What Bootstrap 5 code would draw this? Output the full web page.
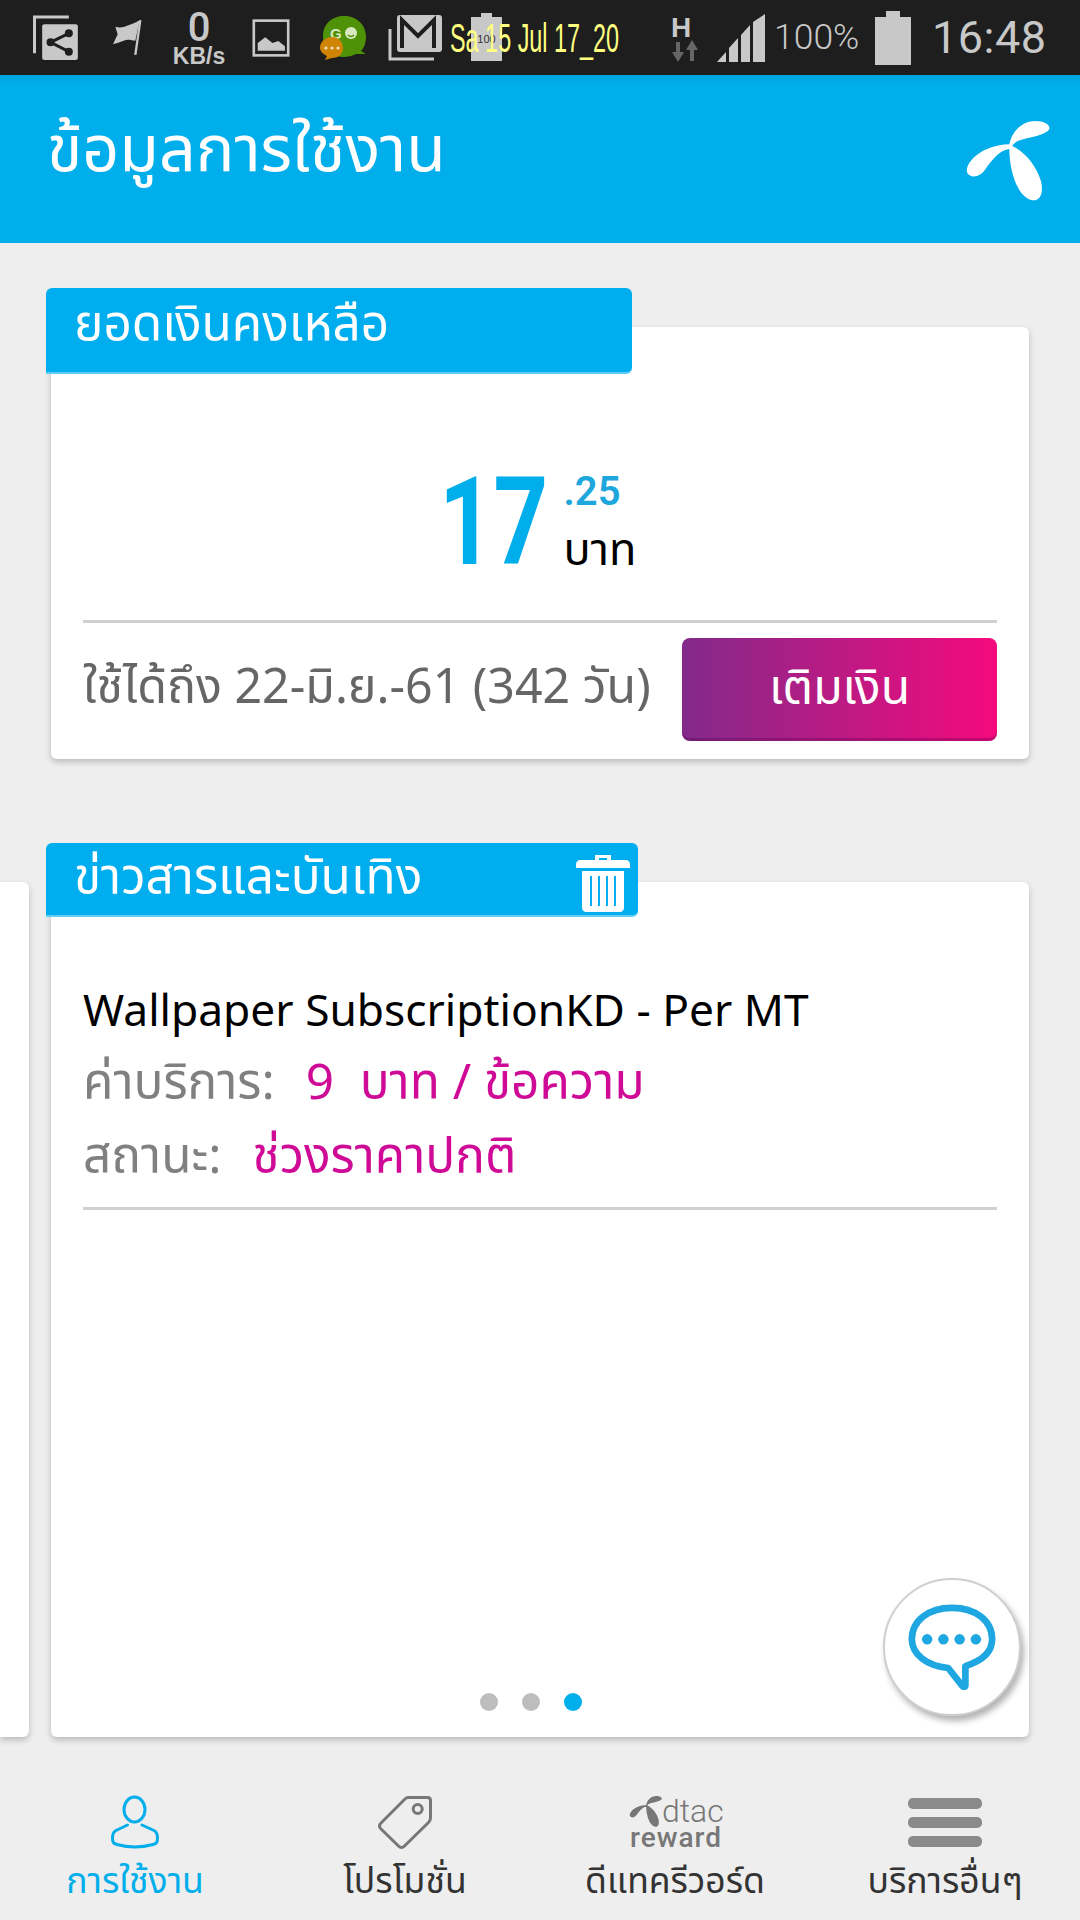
<!DOCTYPE html>
<html lang="th">
<head>
    <meta charset="UTF-8">
    <title>ข้อมูลการใช้งาน</title>
    <link href="https://cdn.jsdelivr.net/npm/bootstrap@5.3.3/dist/css/bootstrap.min.css" rel="stylesheet">
    <style>
        body { width: 1080px; height: 1920px; overflow: hidden; background: #eeeeee; font-family: "Noto Sans Thai", "Noto Sans", "Liberation Sans", sans-serif; }
        .status-bar { height: 75px; background: #1e1e1e; color: #c8c8c8; font-family: Roboto, sans-serif; padding-left: 32px; }
        .status-bar > * { flex: none; }
        .gap-flag { margin-left: 33px; }
        .gap-image { margin-left: 26px; }
        .gap-go { margin-left: 30px; }
        .gap-mail { margin-left: 21px; }
        .gap-net { margin-left: 50px; }
        .gap-signal { margin-left: 17px; }
        .gap-batt { margin-left: 11px; }
        .kb-speed { margin-left: 30px; width: 54px; text-align: center; }
        .kb-speed b { display: block; font-size: 40px; line-height: 36px; font-weight: 500; }
        .kb-speed span { display: block; font: 700 23px/20px "Liberation Sans", sans-serif; margin: 0 -3px; white-space: nowrap; }
        .date-wrap { margin-left: 8px; width: 170px; height: 75px; position: relative; }
        .date-wrap svg { position: absolute; left: 21px; top: 13px; }
        .date-text { position: absolute; left: 0; top: 15px; color: #ffff80; font: 40px/46px "Liberation Sans", sans-serif; transform: scaleX(.585); transform-origin: left top; white-space: nowrap; }
        .batt-pct { margin-left: 9px; font-size: 35.500px; font-weight: 300; width: 90px; white-space: nowrap; }
        .clock { margin-left: 21px; font-size: 45px; font-weight: 400; letter-spacing: .5px; }
        .app-header { height: 168px; background: linear-gradient(#00a5dc, #00aeeb 10px); color: #fff; padding: 0 20px 0 47px; }
        .app-title { font-size: 64.500px; line-height: 1; margin-bottom: 14px; }
        .info-card { background: #fff; border-radius: 6px; box-shadow: 0 3px 6px rgba(0,0,0,.22); position: relative; }
        .balance-card { margin: 84px 51px 0; height: 432px; padding: 0 32px; }
        .tab-label { position: absolute; left: -5px; background: #00aeef; color: #fff; border-radius: 6px 6px 6px 0; border-bottom: 2px solid #5ccdf5; font-size: 49.500px; line-height: 1; padding-left: 28px; }
        .tab-one { top: -39px; width: 586px; height: 86px; padding-top: 13px; }
        .tab-two { top: -39px; width: 592px; height: 74px; padding-top: 11px; }
        .amount-row { height: 293px; padding: 151px 8px 0 0; }
        .amount-big { width: 110px; color: #00aeeb; font: 700 122px/90px Roboto, sans-serif; transform: scaleX(.78); transform-origin: left top; }
        .amount-side { margin-left: 15px; width: 70px; }
        .amount-cents { color: #1ea7dc; font: 600 40px/34px Roboto, sans-serif; margin-top: -3px; }
        .amount-unit { color: #000; font-size: 45px; line-height: 50px; margin-top: 17px; }
        .rule-line { height: 3px; background: #d0d0d0; }
        .expire-text { color: #666; font-size: 48.300px; line-height: 1; white-space: nowrap; }
        .topup-btn { width: 315px; height: 103px; border: 0; border-radius: 8px; color: #fff; font-size: 48px; background: linear-gradient(90deg, #822a8a, #f50a7d); box-shadow: inset 0 -3px 0 rgba(80,0,80,.3); }
        .topup-row { height: 136px; padding: 15px 0 18px; }
        .news-track { margin-top: 123px; gap: 22px; }
        .side-card { width: 29px; height: 855px; border-radius: 0 6px 6px 0; flex: none; }
        .news-card { width: 978px; height: 855px; padding: 0 32px; flex: none; }
        .news-title { color: #000; font-size: 44.300px; line-height: 60px; padding-top: 101px; margin-bottom: 4px; }
        .news-line { font-size: 49.500px; line-height: 74px; color: #808080; }
        .news-line span { color: #cf0a96; margin-left: 18px; }
        .news-rule { margin-top: 12px; }
        .pager-dots { position: absolute; left: 0; right: 18px; bottom: 26px; gap: 24px; }
        .pager-dots i { width: 18px; height: 18px; border-radius: 50%; background: #bdbdbd; }
        .pager-dots i.on { background: #00aeeb; }
        .chat-fab { position: absolute; left: 832px; top: 696px; width: 138px; height: 138px; border-radius: 50%; background: #fff; border: 2px solid #cfcfcf; box-shadow: 3px 5px 6px rgba(0,0,0,.3); }
        .bottom-nav { margin-top: 50px; }
        .nav-cell { height: 133px; color: #333; font-size: 35.500px; line-height: 1; }
        .nav-cell.active { color: #00aeeb; }
        .nav-icon { height: 53px; margin: 9px 0 16px; overflow: visible; }
        .reward-logo { width: 94px; position: relative; color: #777; font-family: Roboto, sans-serif; }
        .reward-logo svg { position: absolute; left: 0; top: -1px; }
        .reward-logo em { position: absolute; left: 34px; top: 0; font-style: normal; font-size: 32px; font-weight: 300; line-height: 30px; }
        .reward-logo b { position: absolute; left: 2px; top: 30px; font-size: 28px; font-weight: 500; line-height: 24px; letter-spacing: 1px; }
    </style>
</head>
<body>
    <div class="status-bar d-flex align-items-center">
        <!-- status icons -->
        <svg width="47" height="46" viewBox="35 30 140 138"><path d="M42 145V36h103" fill="none" stroke="#c8c8c8" stroke-width="9"/><rect x="65" y="58" width="107" height="107" rx="6" fill="#c8c8c8"/><path d="M145 85 90 112l55 28" fill="none" stroke="#1e1e1e" stroke-width="9"/><circle cx="145" cy="85" r="12" fill="#1e1e1e"/><circle cx="90" cy="112" r="12" fill="#1e1e1e"/><circle cx="145" cy="140" r="12" fill="#1e1e1e"/></svg>
        <svg class="gap-flag" width="30" height="37" viewBox="275 45 90 110"><path d="M285 68c12 4 24 2 35-3 14-6 28-10 38-17l-13 62c-12-2-24-6-35 0-11 4-22 8-32 10l14-30z" fill="#c8c8c8"/><path d="M360 48 345 152" stroke="#c8c8c8" stroke-width="7"/></svg>
        <div class="kb-speed"><b>0</b><span>KB/s</span></div>
        <svg class="gap-image" width="38" height="38" viewBox="695 41 115 116"><rect x="700" y="46" width="105" height="106" fill="none" stroke="#c8c8c8" stroke-width="8"/><path d="M712 138v-24l23-17 22 17 18-6 20 16v14z" fill="#c8c8c8"/></svg>
        <svg class="gap-go" width="47" height="44" viewBox="0 0 47 44"><path d="M24 0C36 0 46 8 46 21c0 6-2 11-5 14l5 3-10 0c-4 2-8 3-12 3C12 41 3 32 3 20 3 8 12 0 24 0z" fill="#4f9208"/><text x="10" y="23" font-size="15" font-weight="700" fill="#d8e8c0" font-family="Liberation Sans">G</text><circle cx="31" cy="17" r="6" fill="#d8e8c0"/><path d="M28 19c2 2 4 2 6 0" fill="none" stroke="#4f9208" stroke-width="1.5"/><path d="M12 21c7 0 11 5 11 11s-4 10-11 10l-7 2 2-4C3 38 0 35 0 32c0-6 5-11 12-11z" fill="#cf8406"/><circle cx="6" cy="32" r="1.6" fill="#f0e0c0"/><circle cx="12" cy="32" r="1.6" fill="#f0e0c0"/><circle cx="18" cy="32" r="1.6" fill="#f0e0c0"/></svg>
        <svg class="gap-mail" width="54" height="46" viewBox="0 0 54 46"><path d="M2 14v30h44" fill="none" stroke="#c8c8c8" stroke-width="3"/><rect x="9" y="0" width="45" height="37" rx="3" fill="#c8c8c8"/><path d="M14 33V5l16 16L46 5v28" fill="none" stroke="#1e1e1e" stroke-width="4"/></svg>
        <div class="date-wrap">
            <svg width="31" height="48" viewBox="0 0 31 48"><path d="M10 0h11v4h10v44H0V4h10z" fill="#c8c8c8"/><text x="15.500" y="30" font-size="11" text-anchor="middle" fill="#333" font-family="Liberation Sans">100</text></svg>
            <div class="date-text">Sa 15 Jul 17_20</div>
        </div>
        <svg class="gap-net" width="30" height="50" viewBox="0 0 30 50"><text x="1" y="24" font-size="28" font-weight="700" fill="#c8c8c8" font-family="Liberation Sans">H</text><path d="M8 49 2 39h4V29h4v10h4z" fill="#666"/><path d="M22 27l6 10h-4v11h-4V37h-4z" fill="#666"/></svg>
        <svg class="gap-signal" width="48" height="48" viewBox="0 0 48 48"><path d="M0 48 9 38v10zM12 48V34l9-10v24zM24 48V21l9-10v37zM36 48V8l12-8v48z" fill="#c8c8c8"/></svg>
        <div class="batt-pct">100%</div>
        <svg class="gap-batt" width="36" height="54" viewBox="0 0 36 54"><path d="M11 0h14v6h11v48H0V6h11z" fill="#c8c8c8"/></svg>
        <div class="clock">16:48</div>
    </div>

    <div class="app-header d-flex align-items-center justify-content-between">
        <div class="app-title">ข้อมูลการใช้งาน</div>
        <svg width="110" height="105" viewBox="0 0 330 315"><path d="M178 112C185 75 215 42 255 42c30 0 47 13 43 24-4 12-38 22-73 29-20 5-33 10-38 22 38 18 71 58 85 103 10 35 0 62-24 60-43-5-70-85-70-154-28 2-53 34-73 62-15 22-43 27-53 10-10-23 33-83 126-86z" fill="#fff"/></svg>
    </div>

    <div class="info-card balance-card">
        <div class="tab-label tab-one">ยอดเงินคงเหลือ</div>
        <div class="amount-row d-flex justify-content-center">
            <div class="amount-big">17</div>
            <div class="amount-side">
                <div class="amount-cents">.25</div>
                <div class="amount-unit">บาท</div>
            </div>
        </div>
        <div class="rule-line"></div>
        <div class="topup-row d-flex align-items-center justify-content-between">
            <div class="expire-text">ใช้ได้ถึง 22-มิ.ย.-61 (342 วัน)</div>
            <button class="topup-btn" type="button">เติมเงิน</button>
        </div>
    </div>

    <div class="news-track d-flex">
        <div class="info-card side-card"></div>
        <div class="info-card news-card">
            <div class="tab-label tab-two d-flex justify-content-between">
                <span>ข่าวสารและบันเทิง</span>
                <svg class="me-2" width="54" height="58" viewBox="0 0 54 58"><path d="M19 6V1h16v5h15c2 0 4 2 4 4v4H0v-4c0-2 2-4 4-4zm4 0h8V4h-8z" fill="#fff" fill-rule="evenodd"/><path d="M6 17h42v37c0 2-2 4-4 4H10c-2 0-4-2-4-4z" fill="#fff"/><path d="M15 22v30M23 22v30M31 22v30M39 22v30" stroke="#00aeef" stroke-width="2"/></svg>
            </div>
            <div class="news-title">Wallpaper SubscriptionKD - Per MT</div>
            <div class="news-line">ค่าบริการ: <span>9&nbsp; บาท / ข้อความ</span></div>
            <div class="news-line">สถานะ: <span>ช่วงราคาปกติ</span></div>
            <div class="rule-line news-rule"></div>
            <div class="pager-dots d-flex justify-content-center"><i></i><i></i><i class="on"></i></div>
            <div class="chat-fab d-flex align-items-center justify-content-center">
                <svg width="88" height="86" viewBox="0 0 92 90"><path d="M46 4C22 4 4 17 4 37c0 16 16 28 38 30l15 19c1 1 3 1 3-1V65c16-5 28-14 28-28C88 17 70 4 46 4z" fill="none" stroke="#1ea7e0" stroke-width="7" stroke-linejoin="round"/><circle cx="20" cy="37" r="5.500" fill="#1ea7e0"/><circle cx="37" cy="37" r="5.500" fill="#1ea7e0"/><circle cx="54" cy="37" r="5.500" fill="#1ea7e0"/><circle cx="71" cy="37" r="5.500" fill="#1ea7e0"/></svg>
            </div>
        </div>
    </div>

    <div class="bottom-nav row g-0">
        <div class="col-3 nav-cell active d-flex flex-column align-items-center">
            <svg class="nav-icon" width="50" height="53" viewBox="0 0 50 53"><ellipse cx="24.500" cy="13.500" rx="10.500" ry="12.500" fill="none" stroke="#00aeeb" stroke-width="3"/><path d="M17.500 29 6 34.500C3 36 2.500 38 2.500 42s.5 5.500 4.500 6.500c11 3 25 3 36 0 4-1 4.500-2.500 4.500-6.500s-.5-6-3.500-7.500L32 29" fill="none" stroke="#00aeeb" stroke-width="3" stroke-linecap="round"/></svg>
            <div>การใช้งาน</div>
        </div>
        <div class="col-3 nav-cell d-flex flex-column align-items-center">
            <svg class="nav-icon" width="54" height="53" viewBox="0 0 54 53"><path d="M30 1.500h19.500c2 0 3 1 3 3V22c0 2-.5 3-2 4.500L26.500 50c-2 2-4 2-6 0L3 33c-2-2-2-4 0-6L27 3c1-1 2-1.500 3-1.500z" fill="none" stroke="#777" stroke-width="3" stroke-linejoin="round"/><circle cx="39.700" cy="13" r="4.500" fill="none" stroke="#777" stroke-width="3"/></svg>
            <div>โปรโมชั่น</div>
        </div>
        <div class="col-3 nav-cell d-flex flex-column align-items-center">
            <div class="reward-logo nav-icon">
                <svg width="35" height="33" viewBox="40 35 265 255"><path d="M178 112C185 75 215 42 255 42c30 0 47 13 43 24-4 12-38 22-73 29-20 5-33 10-38 22 38 18 71 58 85 103 10 35 0 62-24 60-43-5-70-85-70-154-28 2-53 34-73 62-15 22-43 27-53 10-10-23 33-83 126-86z" fill="#777"/></svg>
                <em>dtac</em>
                <b>reward</b>
            </div>
            <div>ดีแทครีวอร์ด</div>
        </div>
        <div class="col-3 nav-cell d-flex flex-column align-items-center">
            <svg class="nav-icon" width="74" height="53" viewBox="0 0 74 53"><rect y="2" width="74" height="11" rx="5" fill="#8a8a8a"/><rect y="21" width="74" height="11" rx="5" fill="#8a8a8a"/><rect y="40" width="74" height="11" rx="5" fill="#8a8a8a"/></svg>
            <div>บริการอื่นๆ</div>
        </div>
    </div>

    <script src="https://cdn.jsdelivr.net/npm/bootstrap@5.3.3/dist/js/bootstrap.bundle.min.js"></script>
</body>
</html>
